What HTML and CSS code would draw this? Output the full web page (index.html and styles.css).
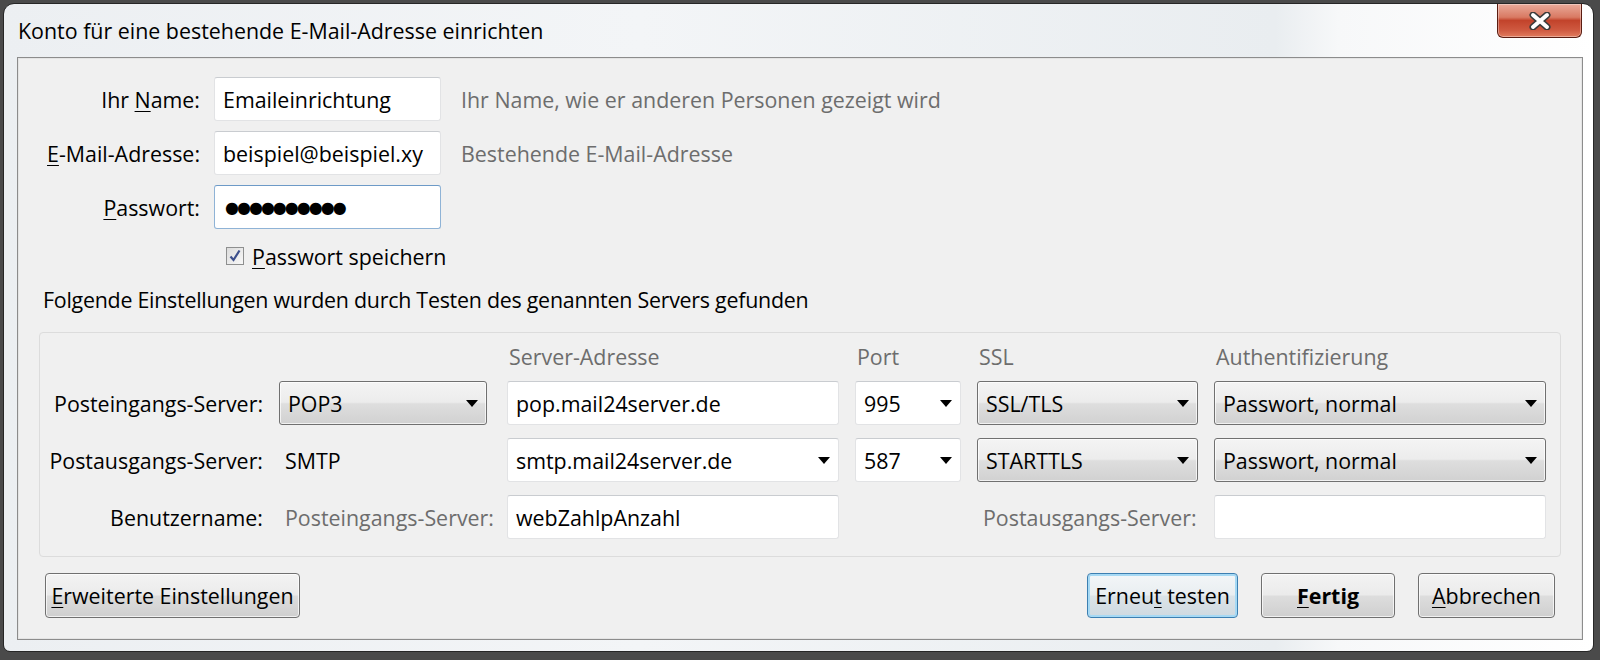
FILE: index.html
```html
<!DOCTYPE html>
<html lang="de">
<head>
  <meta charset="UTF-8">
  <title>Konto einrichten</title>
  <link rel="stylesheet" href="styles.css">
</head>
<body>

  <div class="window">
    <div class="titlebar">
      <div class="title">Konto für eine bestehende E-Mail-Adresse einrichten</div>
      <div class="close-btn">
        <svg width="30" height="18" viewBox="0 0 30 18">
          <path d="M8 3 L22 15 M22 3 L8 15" stroke="#3b3b3b" stroke-width="7" stroke-linecap="round"/>
          <path d="M8 3 L22 15 M22 3 L8 15" stroke="#ffffff" stroke-width="4" stroke-linecap="round"/>
        </svg>
      </div>
    </div>

    <div class="client">
      <div class="account-form">
        <label class="lbl">Ihr <u>N</u>ame:</label>
        <div class="field">Emaileinrichtung</div>
        <div class="hint">Ihr Name, wie er anderen Personen gezeigt wird</div>

        <label class="lbl"><u>E</u>-Mail-Adresse:</label>
        <div class="field">beispiel@beispiel.xy</div>
        <div class="hint">Bestehende E-Mail-Adresse</div>

        <label class="lbl"><u>P</u>asswort:</label>
        <div class="field focused"><span class="dots">●●●●●●●●●●</span></div>
        <div></div>

        <div class="remember">
          <span class="checkbox">
            <svg width="14" height="14" viewBox="0 0 14 14">
              <path d="M2.5 7.5 L5.5 11 L11.5 1.5" fill="none" stroke="#3c4f8c" stroke-width="2.2"/>
            </svg>
          </span>
          <span><u>P</u>asswort speichern</span>
        </div>
      </div>

      <div class="info">Folgende Einstellungen wurden durch Testen des genannten Servers gefunden</div>

      <div class="server-box">
        <div></div>
        <div></div>
        <div class="col-head">Server-Adresse</div>
        <div class="col-head">Port</div>
        <div class="col-head">SSL</div>
        <div class="col-head">Authentifizierung</div>

        <div class="row-lbl">Posteingangs-Server:</div>
        <div class="select w-type">POP3</div>
        <div class="field">pop.mail24server.de</div>
        <div class="field combo">995</div>
        <div class="select">SSL/TLS</div>
        <div class="select">Passwort, normal</div>

        <div class="row-lbl">Postausgangs-Server:</div>
        <div class="plain">SMTP</div>
        <div class="field combo">smtp.mail24server.de</div>
        <div class="field combo">587</div>
        <div class="select">STARTTLS</div>
        <div class="select">Passwort, normal</div>

        <div class="row-lbl">Benutzername:</div>
        <div class="plain muted">Posteingangs-Server:</div>
        <div class="field">webZahlpAnzahl</div>
        <div></div>
        <div class="plain muted">Postausgangs-Server:</div>
        <div class="field"></div>
      </div>

      <div class="button-bar">
        <button class="btn btn-wide"><u>E</u>rweiterte Einstellungen</button>
        <div class="spacer"></div>
        <button class="btn btn-focus">Erneu<u>t</u> testen</button>
        <button class="btn btn-default"><u>F</u>ertig</button>
        <button class="btn btn-cancel"><u>A</u>bbrechen</button>
      </div>
    </div>
  </div>

</body>
</html>
```

FILE: styles.css
```css
body {
  margin: 0;
  background: #4a4a4a;
  font-family: "Open Sans", "Noto Sans", sans-serif;
  font-size: 21.4px;
  color: #000;
  height: 660px;
  overflow: hidden;
}

u {
  text-decoration: underline;
  text-underline-offset: 3px;
  text-decoration-thickness: 1px;
}

.window {
  margin: 3px 0 0 3px;
  width: 1591px;
  box-sizing: border-box;
  border: 1px solid #262626;
  border-radius: 11px 11px 7px 7px;
  padding: 0 10px 11px 13px;
  background: linear-gradient(to right, #eceff2 0%, #f3f5f7 40%, #e9edf0 80%, #f7f8f9 84%, #ffffff 100%);
}

.titlebar {
  height: 53px;
  display: flex;
  justify-content: space-between;
  align-items: flex-start;
}

.title {
  padding: 12px 0 0 1px;
  color: #000;
}

.close-btn {
  width: 85px;
  height: 34px;
  margin-right: 1px;
  box-sizing: border-box;
  border: 1px solid #5a1d12;
  border-top: none;
  border-radius: 0 0 6px 6px;
  background: linear-gradient(#e9aa9a 0%, #d97a63 40%, #c2432b 50%, #cf5a41 80%, #e17c5e 100%);
  display: flex;
  align-items: center;
  justify-content: center;
  box-shadow: inset 0 0 0 1px rgba(255, 255, 255, 0.35);
}

.client {
  border: 1px solid #8c8c8c;
  box-shadow: inset 0 0 0 1px #e4e4e4;
  background: #f0f0f0;
  padding: 19px 21px 21px 0;
}

.account-form {
  display: grid;
  grid-template-columns: 182px 227px 1fr;
  grid-template-rows: 44px 44px 44px auto;
  column-gap: 14px;
  row-gap: 10px;
  align-items: center;
}

.lbl {
  text-align: right;
}

.field {
  height: 100%;
  box-sizing: border-box;
  background: #fff;
  border: 1px solid #e2e3e5;
  border-top-color: #c9ccd0;
  border-radius: 3px;
  padding: 0 8px;
  display: flex;
  align-items: center;
  white-space: nowrap;
  overflow: hidden;
  position: relative;
}

.field.focused {
  border-color: #8fb3d6;
  border-top-color: #6d9ac7;
}

.dots {
  font-family: "DejaVu Sans", sans-serif;
  font-size: 16px;
  letter-spacing: -2px;
  padding-left: 2px;
}

.hint {
  margin-left: 6px;
  color: #6d6d6d;
}

.remember {
  grid-column: 2 / 4;
  height: 20px;
  margin-top: 7px;
  margin-left: 12px;
  display: flex;
  align-items: center;
  gap: 8px;
}

.checkbox {
  width: 18px;
  height: 18px;
  box-sizing: border-box;
  border: 1px solid #8e8f8f;
  background: linear-gradient(135deg, #dcdcdc, #f8f8f8);
  display: flex;
  align-items: center;
  justify-content: center;
}

.info {
  margin: 21px 0 0 25px;
  line-height: 25px;
  letter-spacing: -0.25px;
}

.server-box {
  margin: 20px 0 0 21px;
  border: 1px solid #dcdcdc;
  border-radius: 4px;
  padding: 12px 0 17px 0;
  display: grid;
  grid-template-columns: 223px 212px 332px 106px 221px 332px;
  grid-template-rows: 23px 44px 44px 44px;
  column-gap: 16px;
  row-gap: 13px;
  align-items: center;
}

.col-head {
  color: #6d6d6d;
  padding-left: 2px;
}

.row-lbl {
  text-align: right;
}

.plain {
  padding-left: 6px;
  white-space: nowrap;
}

.muted {
  color: #6d6d6d;
}

.select {
  height: 100%;
  box-sizing: border-box;
  border: 1px solid #707070;
  border-radius: 3px;
  background: linear-gradient(#f4f4f4 0%, #ececec 48%, #dedede 52%, #d1d1d1 100%);
  box-shadow: inset 0 0 0 1px rgba(255, 255, 255, 0.7);
  padding: 0 8px;
  display: flex;
  align-items: center;
  position: relative;
}

.select.w-type {
  width: 208px;
}

.select::after,
.combo::after {
  content: "";
  position: absolute;
  right: 8px;
  top: 50%;
  margin-top: -3px;
  border-left: 6px solid transparent;
  border-right: 6px solid transparent;
  border-top: 7px solid #000;
}

.button-bar {
  margin: 16px 6px 0 27px;
  display: flex;
  gap: 23px;
}

.spacer {
  flex: 1;
}

.btn {
  height: 45px;
  font-family: inherit;
  font-size: 21.4px;
  color: #000;
  border: 1px solid #707070;
  border-radius: 4px;
  background: linear-gradient(#f3f3f3 0%, #ebebeb 48%, #dddddd 52%, #cfcfcf 100%);
  box-shadow: inset 0 0 0 1px rgba(255, 255, 255, 0.7);
  padding: 0;
}

.btn-wide {
  width: 255px;
}

.btn-focus {
  width: 151px;
  border-color: #3c7fb1;
  box-shadow: inset 0 0 0 2px #a6d9f4;
  background: linear-gradient(#f3f6f8 0%, #e9eef1 48%, #dbe3e8 52%, #cfd9e0 100%);
}

.btn-default {
  width: 134px;
  font-weight: bold;
}

.btn-cancel {
  width: 137px;
}
```
